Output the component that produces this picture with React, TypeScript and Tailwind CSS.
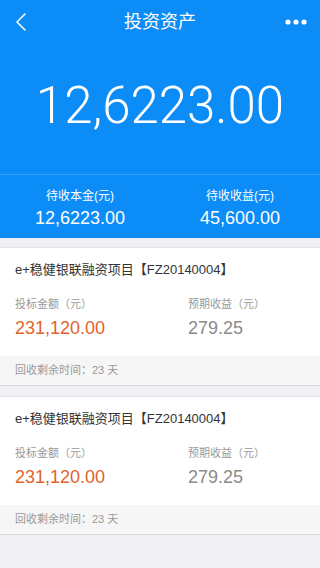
import React from "react";

const FONT = "font-['Liberation_Sans','Noto_Sans_CJK_SC',sans-serif]";

function ProjectCard({ gap }: { gap: string }) {
  return (
    <div className={`${gap} bg-white border-t border-[#e3e3e3]`}>
      <div className="px-[15px] pt-[13px] pb-[16px]">
        <p className="text-[13px] leading-[18px] text-[#333]">e+稳健银联融资项目【FZ20140004】</p>
        <div className="mt-[17px] grid grid-cols-[173px_1fr]">
          <div>
            <p className="text-[11px] leading-[16px] text-[#9a9a9a]">投标金额（元）</p>
            <p className="mt-[4px] text-[18px] leading-[24px] text-[#e2632c]">231,120.00</p>
          </div>
          <div>
            <p className="text-[11px] leading-[16px] text-[#9a9a9a]">预期收益（元）</p>
            <p className="mt-[4px] text-[18px] leading-[24px] text-[#8a8a8a]">279.25</p>
          </div>
        </div>
      </div>
      <div className="h-[30px] px-[15px] flex items-center bg-[#f6f6f6] border-b border-[#d9d9d9] text-[11px] text-[#9a9a9a]">
        回收剩余时间：23 天
      </div>
    </div>
  );
}

export default function App() {
  return (
    <div className={`w-[320px] h-[568px] overflow-hidden bg-[#efeff4] ${FONT}`}>
      <div className="bg-[#0b8cf6] text-white">
        <div className="h-[44px] relative flex items-center justify-between px-[14px]">
          <svg width="14" height="20" viewBox="0 0 14 20" fill="none">
            <polyline points="11,2 3,10 11,18" stroke="white" strokeWidth="1.6" strokeLinecap="round" strokeLinejoin="round" />
          </svg>
          <span className="absolute left-0 right-0 text-center text-[18px] pointer-events-none">投资资产</span>
          <svg width="22" height="6" viewBox="0 0 22 6" className="mr-[-1px]">
            <circle cx="3" cy="3" r="2.6" fill="white" />
            <circle cx="11" cy="3" r="2.6" fill="white" />
            <circle cx="19" cy="3" r="2.6" fill="white" />
          </svg>
        </div>
        <div className="h-[130px] flex items-center justify-center pb-[8px]">
          <span className="font-['Roboto','Liberation_Sans',sans-serif] font-light text-[51px] leading-none">12,6223.00</span>
        </div>
        <div className="h-[64px] border-t border-[#3a9ef5] grid grid-cols-2 pt-[12px]">
          <div className="flex flex-col items-center">
            <p className="text-[12px] leading-[18px]">待收本金(元)</p>
            <p className="mt-[2px] text-[18px] leading-[22px]">12,6223.00</p>
          </div>
          <div className="flex flex-col items-center">
            <p className="text-[12px] leading-[18px]">待收收益(元)</p>
            <p className="mt-[2px] text-[18px] leading-[22px]">45,600.00</p>
          </div>
        </div>
      </div>
      <ProjectCard gap="mt-[9px]" />
      <ProjectCard gap="mt-[10px]" />
    </div>
  );
}
